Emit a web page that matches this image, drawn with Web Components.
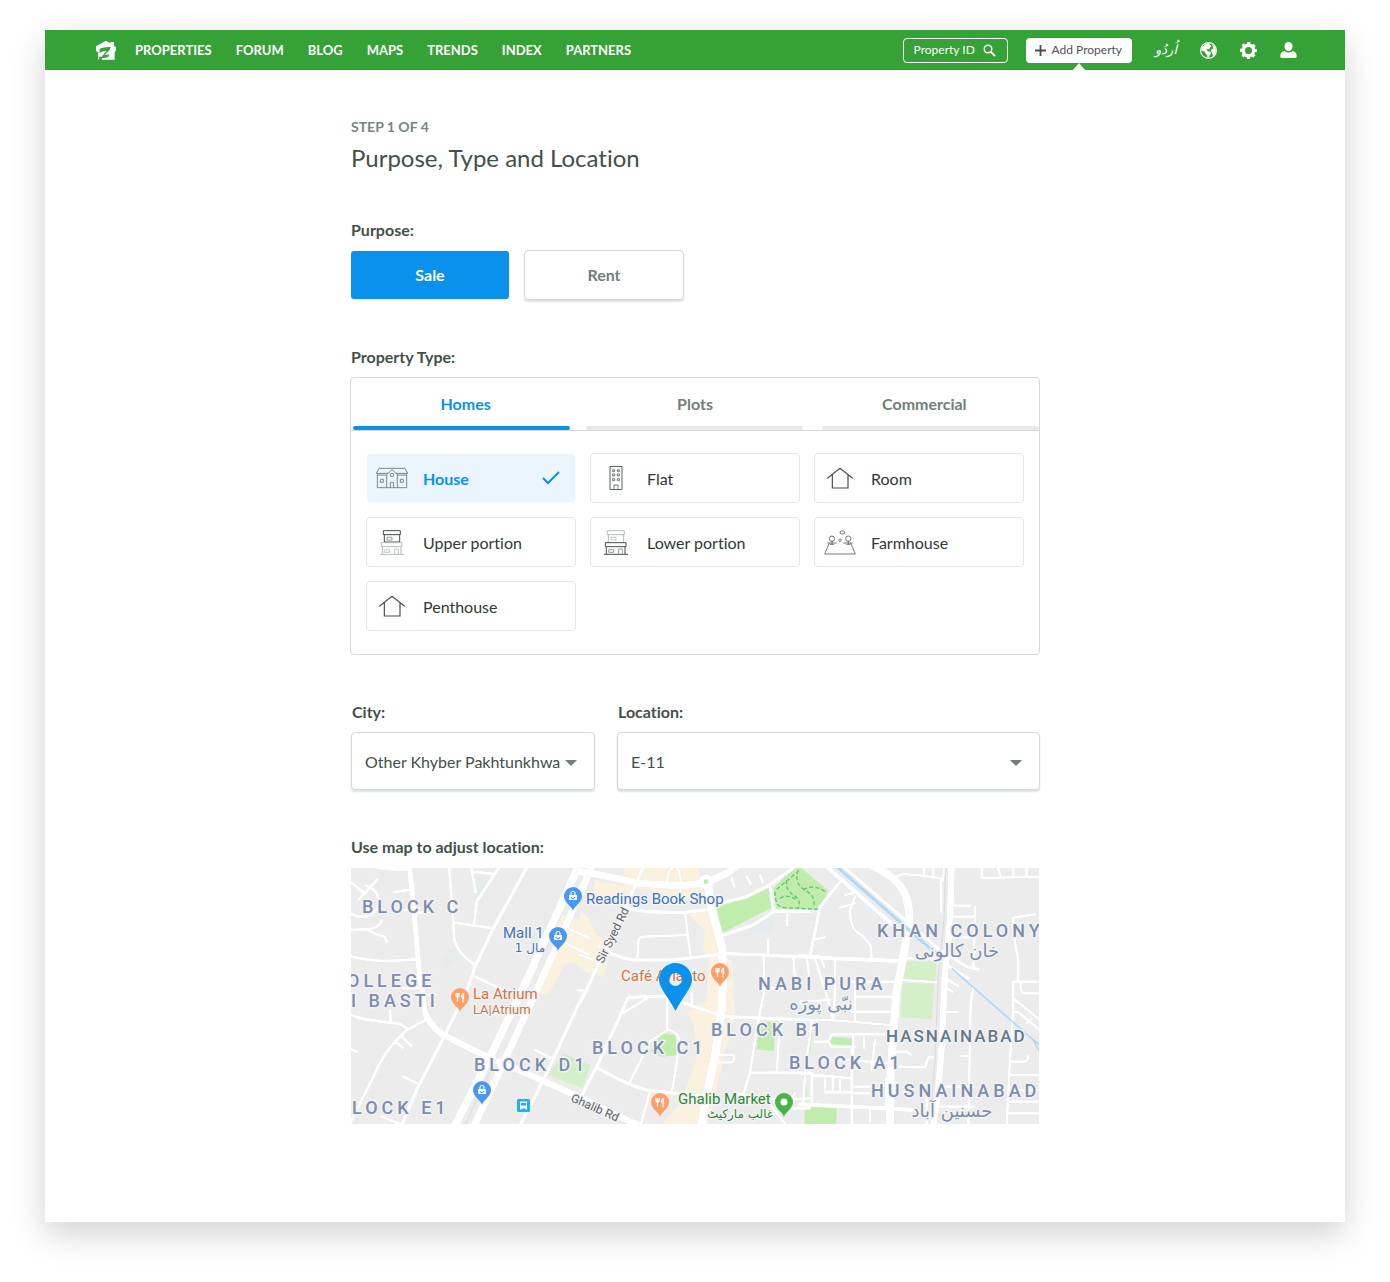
<!DOCTYPE html>
<html lang="en">
<head>
<meta charset="utf-8">
<title>Add Property</title>
<style>
  body { margin: 0; background: #fff; font-family: Lato, "Liberation Sans", sans-serif; font-variant-ligatures: none; color: #444f49; }
</style>
</head>
<body>
<add-property-page></add-property-page>

<script>
const define = (name, html) => {
  const template = document.createElement('template');
  template.innerHTML = '<style>*{box-sizing:border-box}svg{display:block}button,select,input{font:inherit;font-variant-ligatures:none;color:inherit}</style>' + html;
  customElements.define(name, class extends HTMLElement {
    constructor() {
      super();
      this.attachShadow({ mode: 'open' }).append(template.content.cloneNode(true));
    }
  });
};

/* ---------- header ---------- */
define('site-header', `
<style>
  :host { display: block; background: #35a137; color: #fff; }
  header { display: flex; align-items: center; height: 40px; padding: 0 48px 0 50px; }
  nav { display: flex; gap: 24px; margin-left: 18px; font-size: 13px; line-height: 20px; font-weight: 700; }
  a { color: inherit; text-decoration: none; }
  .tools { display: flex; align-items: center; margin-left: auto; font-size: 12px; line-height: 16px; }
  .search { display: flex; align-items: center; gap: 6px; height: 25px; width: 105px; padding: 0 11px 0 10px; border: 1px solid #fff; border-radius: 4px; margin-right: 18px; }
  input { width: 64px; min-width: 0; flex: 1; padding: 0; border: 0; outline: 0; background: none; }
  input::placeholder { color: #fff; opacity: 1; }
  .add { position: relative; display: flex; align-items: center; gap: 6px; height: 25px; padding: 0 10px 0 9px; border-radius: 4px; background: #fff; color: #4c5159; }
  .add::after { content: ""; position: absolute; left: 50%; top: 100%; margin-left: -7px; border: 7px solid transparent; border-top: 0; border-bottom: 8px solid #f8f8f8; }
  .icons { display: flex; align-items: center; gap: 23px; margin-left: 23px; }
  .urdu { font: italic 13px/20px "DejaVu Sans", sans-serif; }
</style>
<header>
  <a href="#" aria-label="Home">
    <svg width="22" height="20" viewBox="165 58 66 60"><path fill="#fff" d="M168 77l30-17 14 8v-4h10v12l6 3v11l-4 4v23h-50V94l-6-2z"/><path fill="#35a137" d="M179 84q12-6 33-5l-4 10-14 15 15-3-6 10 1 7h-30l3-2v-8l8 0 15-18q-12 0-21 7z"/><path fill="#fff" d="M186 113l22-4-5 8h-18z"/></svg>
  </a>
  <nav>
    <a href="#">PROPERTIES</a><a href="#">FORUM</a><a href="#">BLOG</a><a href="#">MAPS</a><a href="#">TRENDS</a><a href="#">INDEX</a><a href="#">PARTNERS</a>
  </nav>
  <div class="tools">
    <label class="search">
      <input type="text" placeholder="Property ID" aria-label="Property ID">
      <svg width="13" height="13" viewBox="0 0 13 13" fill="none" stroke="#fff"><circle cx="5" cy="5" r="3.8" stroke-width="1.4"/><path d="M7.8 7.8l4.4 4.4" stroke-width="1.8"/></svg>
    </label>
    <a class="add" href="#">
      <svg width="11" height="11" viewBox="0 0 11 11" stroke="#444f49" stroke-width="1.8"><path d="M5.5 0v11M0 5.5h11"/></svg>
      Add Property
    </a>
    <div class="icons">
      <a class="urdu" href="#" lang="ur">اُردُو</a>
      <a href="#" aria-label="Language">
        <svg width="17" height="17" viewBox="0 0 17 17"><circle cx="8.500" cy="8.500" r="7.900" fill="none" stroke="#fff" stroke-width="1.200"/><path fill="#fff" d="M9 1L5.500 2 2.500 4.500 1 8l2 1.200 2 .3.300 2 1.700 1.200.3 2.800 1.500.3.700-2.300 1.700-2-.6-1.500-2.600-.8-1.500-1.200 1.200-1 1.800.2.400-1.700 1.400-1-1-1.500zM12 2l3 3 1 3.500-1.200 4-2 1.800-.5-3.300-1.300-1.500.5-2.200 2-.8z"/></svg>
      </a>
      <a href="#" aria-label="Settings">
        <svg width="17" height="17" viewBox="-8.5 -8.5 17 17" fill="none" stroke="#fff"><circle r="5.200" stroke-width="3.400"/><circle r="7.300" stroke-width="2.400" stroke-dasharray="3.130 2.603" stroke-dashoffset="1.560"/></svg>
      </a>
      <a href="#" aria-label="Account">
        <svg width="17" height="17" viewBox="0 0 17 17" fill="#fff"><path d="M8.500 0c2.400 0 4 1.700 4 4.200S10.800 9 8.500 9s-4-2.300-4-4.800S6.100 0 8.500 0zM.3 14.500v-.8c0-2.600 1.800-4.200 4.400-4.700 1 1 2.300 1.500 3.800 1.500s2.800-.5 3.800-1.500c2.600.5 4.400 2.100 4.400 4.700v.8q0 1.500-1.500 1.500H1.800Q.3 16 .3 14.500z"/></svg>
      </a>
    </div>
  </div>
</header>`);

/* ---------- labelled form section ---------- */
define('form-section', `
<style>
  :host { display: block; }
  .title { margin: 0 0 10px; padding-left: 1px; font-size: 16px; line-height: 20px; font-weight: 700; }
</style>
<h2 class="title"><slot name="title"></slot></h2>
<slot></slot>`);

/* ---------- purpose ---------- */
define('purpose-toggle', `
<style>
  :host { display: flex; gap: 14px; }
  button { width: 160px; height: 50px; padding: 0 0 2px; border: 1px solid #d4dad7; border-radius: 4px; background: #fff; color: #737e78; font-size: 16px; font-weight: 700; box-shadow: 0 2px 2px #dde2e0; }
  button[aria-pressed="true"] { border-color: transparent; background: #0a91eb padding-box; color: #fff; box-shadow: none; }
</style>
<button type="button" aria-pressed="true">Sale</button>
<button type="button" aria-pressed="false">Rent</button>`);

/* ---------- property type ---------- */
define('type-tabs', `
<style>
  :host { display: block; border: 1px solid #d4dad7; border-radius: 4px; }
  .tabs { display: grid; grid-template-columns: repeat(3, 1fr); height: 53px; border-bottom: 1px solid #d4dad7; }
  button { display: flex; flex-direction: column; align-items: center; justify-content: space-between; padding: 16px 0 0; border: 0; background: none; color: #737e78; font-size: 16px; line-height: 20px; font-weight: 700; }
  button::after { content: ""; width: 217px; max-width: 96%; height: 4px; border-radius: 2px; background: #e6e9e7; }
  button:first-child::after { align-self: flex-start; margin-left: 2px; }
  button:last-child::after { align-self: flex-end; }
  button[aria-selected="true"] { color: #0a91eb; }
  button[aria-selected="true"]::after { background: #0a91eb; }
  .grid { display: grid; grid-template-columns: repeat(3, 1fr); gap: 14px; padding: 22px 15px 23px; }
</style>
<div class="tabs" role="tablist">
  <button type="button" role="tab" aria-selected="true">Homes</button>
  <button type="button" role="tab" aria-selected="false">Plots</button>
  <button type="button" role="tab" aria-selected="false">Commercial</button>
</div>
<div class="grid"><slot></slot></div>`);

define('type-option', `
<style>
  :host { display: block; }
  button { display: flex; align-items: center; gap: 15px; width: 100%; height: 50px; padding: 1px 15px 0 8px; border: 1px solid #e4e7e5; border-radius: 4px; background: #fff; color: #333836; font-size: 16px; text-align: left; }
  .icon { display: grid; place-items: center; width: 33px; margin-top: -1px; }
  .check { display: none; margin: -2px 0 0 auto; }
  :host([selected]) button { border-color: transparent; background: #eaf5fe padding-box; color: #0a91eb; font-weight: 700; }
  :host([selected]) .check { display: block; }
</style>
<button type="button">
  <span class="icon"><slot name="icon"></slot></span>
  <slot></slot>
  <svg class="check" width="18" height="14" viewBox="0 0 18 14" fill="none" stroke="#0a91eb" stroke-width="2"><path d="M1 7l5 5L17 1"/></svg>
</button>`);

/* ---------- drop-down ---------- */
define('select-field', `
<style>
  :host { display: block; }
  label { display: block; padding-left: 1px; margin-bottom: 10px; font-size: 16px; line-height: 20px; font-weight: 700; }
  .box { display: grid; align-items: center; }
  select, svg { grid-area: 1 / 1; }
  select { appearance: none; width: 100%; height: 58px; margin: 0; padding: 0 30px 0 13px; border: 1px solid #d4dad7; border-radius: 4px; background: #fff; font-size: 16px; box-shadow: 0 2px 2px #dde2e0; }
  svg { justify-self: end; margin: 4px 18px 0 0; pointer-events: none; }
</style>
<label for="field"></label>
<div class="box">
  <select id="field"></select>
  <svg width="12" height="6" viewBox="0 0 12 6"><path d="M0 0h12L6 6z" fill="#737e78"/></svg>
</div>`);

customElements.define('city-location', class extends HTMLElement {
  constructor() {
    super();
    this.attachShadow({ mode: 'open' }).innerHTML = `
      <style>
        :host { display: grid; grid-template-columns: 244fr 423fr; gap: 22px; padding-left: 1px; }
      </style>
      <select-field data-label="City:" data-value="Other Khyber Pakhtunkhwa"></select-field>
      <select-field data-label="Location:" data-value="E-11"></select-field>`;
    for (const field of this.shadowRoot.querySelectorAll('select-field')) {
      field.shadowRoot.querySelector('label').textContent = field.dataset.label;
      field.shadowRoot.querySelector('select').add(new Option(field.dataset.value));
    }
  }
});

/* ---------- map ---------- */
define('location-map', `
<style>
  :host { display: block; margin: 0 1px; padding-top: 1px; }
  svg { width: 100%; height: auto; }
  .roads { fill: none; stroke: #fff; stroke-width: 9; stroke-linejoin: round; stroke-linecap: round; filter: drop-shadow(0 0 2px rgba(0,0,0,.14)); }
  .area, .place { font-family: Roboto, "Liberation Sans", sans-serif; paint-order: stroke; stroke: #f3f3f3; stroke-width: 3px; stroke-linejoin: round; }
  .area { font-size: 18px; font-weight: 500; letter-spacing: 4px; fill: #7b8ead; }
  .town { font-size: 17px; letter-spacing: 2px; fill: #63798e; }
  .ar { font-family: "DejaVu Sans", sans-serif; font-weight: 400; letter-spacing: 0; }
  .place { font-size: 15px; }
  .small { font-size: 13px; }
  .small.ar { font-size: 12px; }
  .street { font-size: 12px; fill: #5c6268; }
</style>
<svg viewBox="0 0 688 256" role="img" aria-label="Map of the chosen location">
  <defs>
    <path id="drop" d="M0 14C-1 9-9 6-9-1A9 9 0 0 1 9-1C9 6 1 9 0 14z"/>
    <g id="shop"><use href="#drop" fill="#4a97f2"/><path d="M-4-2h8v5h-8z" fill="#fff"/><path d="M-2-2v-1.500a2 2 0 0 1 4 0V-2" fill="none" stroke="#fff" stroke-width="1.200"/><path d="M-1.800 0a1.800 1.800 0 0 0 3.600 0" fill="none" stroke="#4a97f2"/></g>
    <g id="food"><use href="#drop" fill="#fd9f67"/><path d="M-4-5v3q0 1 1.500 1v5M-1-5v3q0 1-1.500 1v-4M3.500-5q-2 1-2 4h1.500v5.500M3.500-5v6" fill="none" stroke="#fff" stroke-width="1.200"/></g>
  </defs>
  <rect width="688" height="256" fill="#ececec"/>
  <g transform="scale(.33333)">
    <!-- built-up areas, parks -->
    <g transform="translate(-18 -24)">
      <path fill="#faf1df" d="M640 160l50 15 50 22v150l-52-40-28 5-18 38-35 55-27-5 45-100z"/>
      <path fill="#e6ebee" d="M385 50l50 0-40 75zM285 300l40-35 15 25-40 40z"/>
      <path fill="#d3f0c8" d="M655 580l80 35-22 70-103-40z"/>
    </g>
    <g transform="translate(687 -24)">
      <path fill="#faf1df" d="M45 60l115 25-20 55-80-30-20-20zM0 155l28 20 20 50 45 25-20 100-73-20zM130 24h225l20 95-110-8-60-20-70-10zM325 165l65-15 25 140 4 160-30 150-35 192h-110l60-65 45-130-5-100-25-40 60-35 10-120-20-30 5-60zM435 290l20 15 10 165-30 110-35 150-15 62h-20z"/>
      <path fill="#e6ebee" d="M500 190l85-45-5 75h-50z"/>
      <path fill="#c0ecae" d="M410 145L565 82l8 62-145 75zM580 85l60-61h25l80 68-25 58-132-5z"/>
      <path fill="#c0ecae" d="M210 575l35-55 42 5 3 60-45 5zM536 486h50l-4 87-52-5z"/>
      <path fill="none" stroke="#5fc767" stroke-width="4" stroke-dasharray="12 7" d="M585 95q0 50 30 48l105 5M590 88l60-50M620 60q-5 30 20 45t15 38M655 30q-15 40 20 60t25 50M600 115q20-15 50 5M670 90q30-20 65 5"/>
    </g>
    <g transform="translate(1347 -24)">
      <path fill="#d3f0c8" d="M315 303l95 2-5 58-92-3zM308 368l94 4-6 106-93-6z"/>
      <path fill="#c0ecae" d="M92 530l68 6-4 24-68-8zM15 740h96l-3 52H13z"/>
      <path fill="#d3f0c8" d="M25 520h12l-5 60h-10zM14 680h8v45h-8z"/>
    </g>
    <!-- streets -->
    <g class="roads" transform="translate(-18 -24)">
      <path stroke-width="25" d="M330 796L440 580 560 330 702 16"/>
      <path stroke-width="22" d="M388 796L475 610 600 335 640 248 742 16"/>
      <path stroke-width="16" d="M193 16l12 114 17 200 20 135"/>
      <path stroke-width="20" d="M242 462q8 25 48 60l130 65 140 60 170 76"/>
      <path d="M90 22q50 10 100 6M98 58L40 120M10 60l50 42M62 76C110 90 108 140 80 163 60 175 40 175 10 158M10 210l60-2q30-3 40-26M70 210q20 15 48 20l8 16M148 96l42-6M160 150h45M206 160l44-5M10 288q80 17 120 15l85-5M215 405h54M175 385h45M18 465q32 13 72 17l75 10 20 13M135 452l2 30M245 478l-60 32-35 35q-40 45-60 95L10 800M170 530l30 28M150 543l22 20M10 564l25 11M175 650l45 22M110 770l60 24"/>
      <path d="M312 16l13 174 3 50q10 40 62 75M378 16l14 80M380 35l70 7M466 16l-71 109-7 65M330 188l115 17M390 350l90 42M570 570l50 25M699 390l30 3M670 205l60 28M650 243l80 40"/>
      <path stroke-width="11" d="M549 16L445 205l-55 115-20 60-70 145-85 165-45 106M716 400L600 650 525 796"/>
      <path stroke="#e4e4e4" stroke-width="3" d="M362 792L455 592M578 318l70-150"/>
    </g>
    <g class="roads" transform="translate(687 -24)">
      <path stroke-width="22" d="M0 35l60 10 120 25 120 8 80-10 60-28 40-30"/>
      <path stroke-width="26" d="M382 65l14 85 29 110 5 70-5 120-20 140-20 90-20 116"/>
      <circle cx="378" cy="65" r="15" stroke-width="14"/>
      <path stroke-width="11" d="M192 16l-32 74-80 170L0 430M135 145l65 10 110 3 75-10M60 260q40 30 100 40h120l140-17M420 280l130 5 140 7M400 135l100-25 60-30 85-60M430 225l90-30 60-40h110M430 470l260 10M145 412l115-4M300 425l120 40M145 412q-15 28-30 68L50 620 0 715M50 622q80 48 150 68l180 20"/>
      <path stroke-width="8" d="M260 65q5-40 25-46 15 6 18 48M315 160l17 130M172 295l3-50q0-13 15-15l135-5M0 285l50 18M455 55l8 25M500 50l12 22M540 45l8 20M570 80l10 75M622 155v40M565 240v45M550 285l5 100-20 95-25 158-20 65M640 290l5 70M550 385h60M335 400v30M200 415l-80 50M262 410v100l-52 35-60 120M262 510q28 0 36 30l-8 70-15 90M210 695l-28 100M415 585h40q8 0 8 10 0 12-10 12h-45M510 638h180M600 485l-10 153M470 700l130 20 90-5M560 720l55 72M645 700l-25 40M620 745h70"/>
      <path stroke-width="20" d="M0 713l100 48 75 35"/>
    </g>
    <circle cx="1065" cy="41" r="7" fill="#c0ecae"/>
    <g class="roads" transform="translate(1347 -24)">
      <path stroke-width="25" d="M215 16q75 35 97 80 16 30 16 84l-18 110-20 100-10 130-8 120-2 156"/>
      <path stroke-width="20" d="M455 16l-5 164-15 160-10 220-10 130-15 106"/>
      <path stroke-width="13" d="M76 16l204 180M0 288l100 7 200 8M0 733l155 7 190 10"/>
      <path stroke-width="10" d="M125 16l295 254 80 50 35 8M440 315l65 40M120 65l-60 75-30 150"/>
      <path stroke-width="8" d="M165 110l-15 40q0 50 20 65 35 25 42 45l3 35M120 143l45-13M135 105l35-8M40 240l35-8M45 295l30 95 25 90M105 295v95l-5 90M65 300l8 20M150 365h130M165 410h110M155 455h115M165 365v115M20 290l10 80M0 425l90-5M0 480h90l180 15M35 485L15 640l-5 90M45 545h40l10-22h160M85 545l10 15h70M160 530v90M192 530v35M225 540l-10 90M60 600h80l130 10M0 640l155 15M35 640v90M75 655v40M98 655v40M120 655v40M75 697h80M155 560v232M155 680h60M155 700h60M210 745v40M258 655v90M290 575h30l12 8M290 620l85 2 10-30h15M310 295h105M310 360l100 7"/>
      <path stroke-width="8" d="M285 50l25-8 40 3 75 10M372 16v28M400 16v30M432 16l-2 44M424 60v95M545 16v38l172-4M592 16l8 30M640 16v32M680 16v32M455 137h55M455 170h70v-30M525 140v60l-5 120M450 232h65M705 163l-65 10v27q5 60 15 100v62M445 360l30 18M440 385l18 10M440 456h30M520 382l-8 48-7 362M485 588h20M720 365h-80v75l-10 160-10 192M640 415l80 65M640 455q20 0 30 15l50 40M680 490l15-15M662 370q0 30 10 30h50M635 605h40q10-5 10-18M632 645h88M625 690h95M625 760h95M630 725h90M420 680h100M380 700v96M420 740h100"/>
    </g>
    <g transform="translate(1347 -24)" fill="none">
      <path stroke="#dcdee0" stroke-width="4" d="M437 20l-5 160-17 170-10 250-10 130"/>
      <path stroke="#abdafc" stroke-width="9" d="M108 18L405 278"/>
      <path stroke="#abdafc" stroke-width="5" d="M455 325l245 215 24 45M690 532l34 26"/>
    </g>
  </g>
  <!-- district names -->
  <g class="area">
    <text x="11" y="45">BLOCK C</text>
    <text x="-4" y="119">OLLEGE</text>
    <text x="0" y="139">I BASTI</text>
    <text x="1" y="246">LOCK E1</text>
    <text x="123" y="203">BLOCK D1</text>
    <text x="241" y="186">BLOCK C1</text>
    <text x="360" y="168">BLOCK B1</text>
    <text x="438" y="201">BLOCK A1</text>
    <text x="407" y="122">NABI PURA</text>
    <text x="526" y="69">KHAN COLONY</text>
    <text x="520" y="229">HUSNAINABAD</text>
    <text class="town" x="535" y="174">HASNAINABAD</text>
    <text class="ar" x="606" y="89" text-anchor="middle">خان کالونی</text>
    <text class="ar" x="470" y="142" text-anchor="middle">نبّی پورَه</text>
    <text class="ar" x="601" y="249" text-anchor="middle">حسنین آباد</text>
  </g>
  <g class="place">
    <g fill="#4272b8">
      <text x="235" y="36">Readings Book Shop</text>
      <text x="152" y="70">Mall 1</text>
      <text class="small ar" x="179" y="84" text-anchor="middle">مال 1</text>
    </g>
    <g fill="#d2734a">
      <text x="122" y="131">La Atrium</text>
      <text class="small" x="122" y="146">LA|Atrium</text>
      <text x="270" y="113">Café Aylanto</text>
    </g>
    <g fill="#298a2e">
      <text x="327" y="236">Ghalib Market</text>
      <text class="small ar" x="389" y="250" text-anchor="middle">غالب مارکیٹ</text>
    </g>
    <text class="street" transform="translate(252 96) rotate(-64)">Sir Syed Rd</text>
    <text class="street" transform="translate(219 233) rotate(24)">Ghalib Rd</text>
  </g>
  <!-- pins -->
  <use href="#shop" x="222" y="29"/>
  <use href="#shop" x="207" y="69"/>
  <use href="#shop" x="131" y="223"/>
  <use href="#food" x="109" y="130"/>
  <use href="#food" x="369" y="105"/>
  <use href="#food" x="309" y="235"/>
  <g transform="translate(433 235)"><use href="#drop" fill="#49b248"/><circle r="3.500" cy="-1" fill="#fff"/></g>
  <g transform="translate(166 231)"><rect width="13" height="13" rx="1.500" fill="#17b3f5"/><path d="M3 2.500h7v8H8.500v-1h-4v1H3z" fill="#fff"/><path d="M4 4h5v2.500H4z" fill="#17b3f5"/></g>
  <path fill-rule="evenodd" d="M324.500 95a16.500 16.500 0 0 1 16.500 16.500c0 9-10 18-16.500 31.500-6.500-13.500-16.500-22.500-16.500-31.500a16.500 16.500 0 0 1 16.500-16.500zm0 10a6.500 6.500 0 1 0 0 13 6.500 6.500 0 1 0 0-13z" fill="#0a91eb"/>
</svg>`);

/* ---------- page ---------- */
define('add-property-page', `
<style>
  :host { display: block; padding: 30px 45px 60px; }
  .sheet { background: #fff; box-shadow: 0 12px 32px rgba(0,0,0,.18); }
  main { display: flex; flex-direction: column; gap: 47px; max-width: 690px; margin: 0 auto; padding: 48px 0 98px; }
  .intro { padding-left: 1px; }
  .step { margin: 0 0 7px; font-size: 14px; line-height: 18px; font-weight: 700; color: #7a857f; }
  h1 { margin: 0; font-size: 24px; line-height: 30px; font-weight: 400; }
</style>
<div class="sheet">
  <site-header></site-header>
  <main>
    <div class="intro">
      <p class="step">STEP 1 OF 4</p>
      <h1>Purpose, Type and Location</h1>
    </div>
    <form-section>
      <span slot="title">Purpose:</span>
      <purpose-toggle></purpose-toggle>
    </form-section>
    <form-section>
      <span slot="title">Property Type:</span>
      <type-tabs>
        <type-option selected>
          <svg slot="icon" width="32" height="22" viewBox="45 66 96 66" fill="none" stroke="#7d8a85" stroke-width="3"><path d="M54 70h78l8 15-5 5h-24L93 74 76 90H51l-5-5zM49 90v38h88V90M46 85h36M104 85h36M77 90v38M109 90v38M88 127v-15h10v15M58 103h9v9h-9zM118 103h9v9h-9z"/><circle cx="93" cy="90" r="5"/></svg>House
        </type-option>
        <type-option>
          <svg slot="icon" width="16" height="24" viewBox="65 63 48 72" fill="none" stroke="#59625e" stroke-width="3"><path d="M71 64.500h36v69H71z"/><path stroke-width="2.500" d="M83 133v-13h12v13M79 74h6v6h-6zM93 74h6v6h-6zM79 87h6v6h-6zM93 87h6v6h-6zM79 101h6v6h-6zM93 101h6v6h-6z"/></svg>Flat
        </type-option>
        <type-option>
          <svg slot="icon" width="26" height="22" viewBox="66 66 78 66" fill="none" stroke="#444f49" stroke-width="3.500"><path d="M67 100l38-30 38 30M82 89v40h47V89"/></svg>Room
        </type-option>
        <type-option>
          <svg slot="icon" width="24" height="25" viewBox="59 255 72 75" fill="none" stroke-width="3"><g stroke="#444f49"><path d="M69 257h51v12H69zM72 269v23M118 269v23M72 291h46"/><path stroke-width="2.500" stroke="#7d8a85" d="M80 277h15v8H80z"/></g><g stroke="#b4bbb7"><path d="M63 293h62v12H63zM66 306v21M122 306v21M59 328h72"/><path stroke-width="2.500" d="M73 314h15v8H73zM103 327v-15h11v15"/></g></svg>Upper portion
        </type-option>
        <type-option>
          <svg slot="icon" width="24" height="25" viewBox="59 255 72 75" fill="none" stroke-width="3"><g stroke="#b4bbb7"><path d="M69 257h51v12H69zM72 269v23M118 269v23"/><path stroke-width="2.500" d="M80 277h15v8H80z"/></g><g stroke="#444f49"><path d="M63 293h62v12H63zM66 306v21M122 306v21M59 328h72"/><path stroke-width="2.500" stroke="#7d8a85" d="M73 314h15v8H73zM103 327v-15h11v15"/></g></svg>Lower portion
        </type-option>
        <type-option>
          <svg slot="icon" width="32" height="25" viewBox="54 253 96 75" fill="none" stroke="#59625e" stroke-width="2.500"><path d="M70 292l-14 33h92l-14-33M64 292h28M112 292h28M78 285v12M127 285v12M72 296h12M121 296h12"/><circle cx="78" cy="279" r="8"/><circle cx="127" cy="279" r="8"/><circle cx="102" cy="284" r="3.500"/><path d="M103 264q-4-7 4-8 6-3 9 3 2 6-6 6z"/></svg>Farmhouse
        </type-option>
        <type-option>
          <svg slot="icon" width="26" height="22" viewBox="66 66 78 66" fill="none" stroke="#444f49" stroke-width="3.500"><path d="M67 100l38-30 38 30M82 89v40h47V89"/></svg>Penthouse
        </type-option>
      </type-tabs>
    </form-section>
    <city-location></city-location>
    <form-section>
      <span slot="title">Use map to adjust location:</span>
      <location-map></location-map>
    </form-section>
  </main>
</div>`);
</script>
</body>
</html>
